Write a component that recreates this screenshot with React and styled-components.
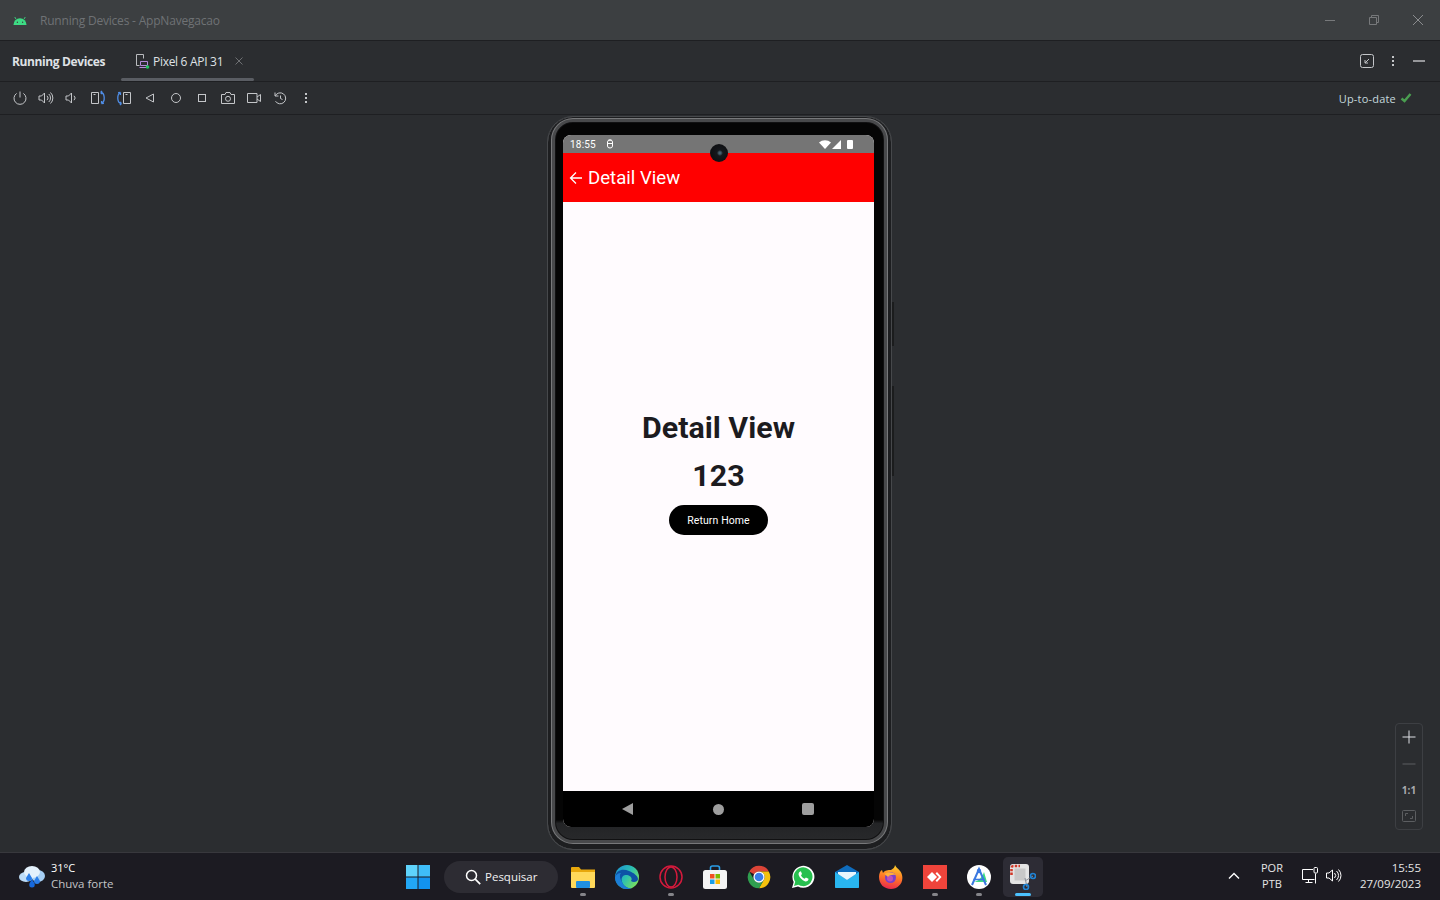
import styled, { createGlobalStyle } from "styled-components";

const GlobalStyle = createGlobalStyle`
  html, body, #root { margin: 0; padding: 0; height: 100%; }
  body { background: #2b2d30; overflow: hidden; font-family: "Open Sans", sans-serif; }
  * { box-sizing: border-box; }
`;

function App() {
  return (
    <Page>
      <GlobalStyle />
      <TitleBar>
        <Android width="14" height="9" viewBox="0 0 16 10">
          <path d="M0.5 10a7.5 7.500 0 0 1 15 0z" fill="#3ddc84" />
          <path d="M3.500 3.600 2 1M12.500 3.600 14 1" stroke="#3ddc84" strokeWidth="1" />
          <circle cx="5" cy="7" r=".8" fill="#3c3f41" />
          <circle cx="11" cy="7" r=".8" fill="#3c3f41" />
        </Android>
        <WindowTitle>Running Devices - AppNavegacao</WindowTitle>
        <WindowButtons>
          <Glyph width="12" height="12" viewBox="0 0 12 12" $color="#77797b">
            <path d="M1 6.500h10" />
          </Glyph>
          <Glyph width="12" height="12" viewBox="0 0 12 12" $color="#77797b">
            <path d="M1.500 3.500h7v7h-7zM3.500 3.500v-2h7v7h-2" />
          </Glyph>
          <Glyph width="12" height="12" viewBox="0 0 12 12" $color="#8a8c8e">
            <path d="M1 1l10 10M11 1 1 11" />
          </Glyph>
        </WindowButtons>
      </TitleBar>

      <TabBar>
        <PanelName>Running Devices</PanelName>
        <Tab>
          <Glyph width="16" height="16" viewBox="0 0 16 16" $color="#b9bbbe">
            <path d="M5.500 12.500h-3v-11h7v4" />
            <path d="M6.500 8.500h7v4h-7z" stroke="#b48ad8" />
            <path d="M5.500 14.500h9" stroke="#b48ad8" />
            <circle cx="13.500" cy="14" r="1.800" fill="#22c55e" stroke="none" />
          </Glyph>
          <TabLabel>Pixel 6 API 31</TabLabel>
          <Glyph width="10" height="10" viewBox="0 0 10 10" $color="#6e7073">
            <path d="M1.500 1.500l7 7M8.500 1.500l-7 7" />
          </Glyph>
        </Tab>
        <TabTools>
          <Glyph width="14" height="14" viewBox="0 0 14 14">
            <rect x=".5" y=".5" width="13" height="13" rx="2" />
            <path d="M9 5 5 9M5 6v3h3" />
          </Glyph>
          <Dots />
          <Glyph width="14" height="14" viewBox="0 0 14 14">
            <path d="M1 7h12" strokeWidth="1.400" />
          </Glyph>
        </TabTools>
      </TabBar>

      <Toolbar>
        <ToolButton><Glyph viewBox="0 0 16 16"><path d="M8 1.500v6M4.600 3.400a6 6 0 1 0 6.800 0" /></Glyph></ToolButton>
        <ToolButton><Glyph viewBox="0 0 16 16"><path d="M1 6h2.500l3-3v10l-3-3H1zM9 5.800a3 3 0 0 1 0 4.400M10.800 4a5.500 5.500 0 0 1 0 8M12.500 2.500a7.600 7.600 0 0 1 0 11" /></Glyph></ToolButton>
        <ToolButton><Glyph viewBox="0 0 16 16"><path d="M2 6h2.500l3-3v10l-3-3H2zM10 5.800a3 3 0 0 1 0 4.400" /></Glyph></ToolButton>
        <ToolButton>
          <Glyph viewBox="0 0 16 16">
            <path d="M1.500 2.500h7v11h-7zM3.500 4.500h2" />
            <BlueArc d="M10.500 2.500c4.500 0 5 9 1 11M11.500 13.500l2.400-.2M11.500 13.500l.1-2.600M10.500 2.500l1.600-1.500M10.500 2.500l1.600 1.500" />
          </Glyph>
        </ToolButton>
        <ToolButton>
          <Glyph viewBox="0 0 16 16">
            <path d="M7.500 2.500h7v11h-7zM9.500 4.500h2" />
            <BlueArc d="M5.500 13.500c-4.500 0-5-9-1-11M4.500 2.500l-2.400.2M4.500 2.500l-.1 2.600M5.500 13.500l-1.600 1.500M5.500 13.500l-1.600-1.500" />
          </Glyph>
        </ToolButton>
        <ToolButton><Glyph viewBox="0 0 16 16"><path d="M11.500 4v8L4 8z" /></Glyph></ToolButton>
        <ToolButton><Glyph viewBox="0 0 16 16"><circle cx="8" cy="8" r="4.500" /></Glyph></ToolButton>
        <ToolButton><Glyph viewBox="0 0 16 16"><rect x="4.500" y="4.500" width="7" height="7" /></Glyph></ToolButton>
        <ToolButton><Glyph viewBox="0 0 16 16"><path d="M1.500 4.500h3.500l1-2h4l1 2h3.500v9h-13z" /><circle cx="8" cy="8.800" r="2.500" /></Glyph></ToolButton>
        <ToolButton><Glyph viewBox="0 0 16 16"><path d="M1.500 3.500h9.500v9h-9.500zM11 7l3.500-2.500v7L11 9" /></Glyph></ToolButton>
        <ToolButton><Glyph viewBox="0 0 16 16"><path d="M3 2.500v3.500h3.500M3.200 6a5.500 5.500 0 1 1 .3 5.200M8.500 5.500v3l2 1" /></Glyph></ToolButton>
        <ToolButton><Dots /></ToolButton>
        <SyncStatus>
          Up-to-date
          <Glyph width="12" height="12" viewBox="0 0 12 12" $color="#4a9e50">
            <path d="M1.500 6.500 4.500 9l6-7" strokeWidth="2.400" />
          </Glyph>
        </SyncStatus>
      </Toolbar>

      <Stage>
        <Phone>
          <SideButton $top={185} $height={44} />
          <SideButton $top={269} $height={90} />
          <Camera />
          <Screen>
            <StatusBar>
              <StatusTime>18:55</StatusTime>
              <Glyph width="10" height="10" viewBox="0 0 10 10" $color="#fff">
                <path d="M2.500 3a2.500 2 0 0 1 5 0v4a2.500 2 0 0 1-5 0zM2.500 4.500h5M3.500 1l3 0" />
              </Glyph>
              <StatusIcons>
                <svg width="12" height="9" viewBox="0 0 12 9"><path d="M0 2.500a9 9 0 0 1 12 0L6 9z" fill="#fff" /></svg>
                <svg width="9" height="9" viewBox="0 0 9 9"><path d="M9 0v9H0z" fill="#fff" /></svg>
                <Battery />
              </StatusIcons>
            </StatusBar>
            <AppBar>
              <Glyph width="14" height="14" viewBox="0 0 14 14" $color="#fff">
                <path d="M13 7H1.500M7 1.500 1.500 7 7 12.500" strokeWidth="1.300" />
              </Glyph>
              <AppTitle>Detail View</AppTitle>
            </AppBar>
            <Body>
              <Heading>Detail View</Heading>
              <Heading>123</Heading>
              <ReturnButton>Return Home</ReturnButton>
            </Body>
            <NavBar>
              <svg width="11" height="12" viewBox="0 0 11 12"><path d="M0 6 11 0v12z" fill="#9e9e9e" /></svg>
              <NavHome />
              <NavRecent />
            </NavBar>
          </Screen>
        </Phone>

        <ZoomPanel>
          <Glyph width="14" height="14" viewBox="0 0 14 14" $color="#dfe1e5">
            <path d="M7 .5v13M.5 7h13" />
          </Glyph>
          <Glyph width="14" height="14" viewBox="0 0 14 14" $color="#5c5e61">
            <path d="M.5 7h13" />
          </Glyph>
          <ZoomLabel>1:1</ZoomLabel>
          <Glyph width="14" height="12" viewBox="0 0 14 12" $color="#5c5e61">
            <rect x=".5" y=".5" width="13" height="11" rx="1" />
            <path d="M3.500 6V3.500H6M10.500 6v2.500H8" />
          </Glyph>
        </ZoomPanel>
      </Stage>

      <Taskbar>
        <Weather>
          <svg width="28" height="24" viewBox="0 0 28 24">
            <ellipse cx="8" cy="12" rx="7" ry="5" fill="#bcdcf8" />
            <ellipse cx="20" cy="11" rx="7" ry="6" fill="#a6cff5" />
            <ellipse cx="14" cy="7" rx="8" ry="6" fill="#e4f1fc" />
            <path d="M11 8l3 5a3 3 0 1 1-6 0zM19 11l3 5a3 3 0 1 1-6 0z" fill="#2a7de8" />
            <path d="M14 14l2.500 4.500a2.800 2.800 0 1 1-5 0z" fill="#1668dc" />
          </svg>
          <WeatherText>
            <WeatherTemp>31°C</WeatherTemp>
            <WeatherDesc>Chuva forte</WeatherDesc>
          </WeatherText>
        </Weather>

        <TaskIcons>
          <TaskSlot>
            <svg width="24" height="24" viewBox="0 0 24 24">
              <rect width="11.500" height="11.500" fill="#5fd3fb" />
              <rect x="12.500" width="11.500" height="11.500" fill="#3fbdf8" />
              <rect y="12.500" width="11.500" height="11.500" fill="#22a7f5" />
              <rect x="12.500" y="12.500" width="11.500" height="11.500" fill="#1293f0" />
            </svg>
          </TaskSlot>
          <SearchBox>
            <Glyph width="16" height="16" viewBox="0 0 16 16" $color="#fff">
              <circle cx="6.500" cy="6.500" r="5" strokeWidth="1.500" />
              <path d="m10.200 10.200 5 5" strokeWidth="1.700" />
            </Glyph>
            Pesquisar
          </SearchBox>
          <TaskSlot $open>
            <svg width="24" height="22" viewBox="0 0 24 22">
              <path d="M0 2a1 1 0 0 1 1-1h7l2 2.500h14V20H0z" fill="#e8a80c" />
              <path d="M0 6h24v15a1 1 0 0 1-1 1H1a1 1 0 0 1-1-1z" fill="#ffd95a" />
              <rect x="5" y="15" width="14" height="7" rx="1" fill="#1f8fe0" />
            </svg>
          </TaskSlot>
          <TaskSlot>
            <svg width="24" height="24" viewBox="0 0 24 24">
              <defs>
                <linearGradient id="edgeTop" x1="0" y1="0" x2="1" y2=".7">
                  <stop offset="0" stopColor="#1b8ed8" />
                  <stop offset=".55" stopColor="#2cc0b0" />
                  <stop offset="1" stopColor="#7ae05c" />
                </linearGradient>
              </defs>
              <circle cx="12" cy="12" r="12" fill="url(#edgeTop)" />
              <path d="M0 12C1 5 8 3 14 6c5 2 9 5 9 8 0 3-5 4-7 2 2-3-1-6-5-6-4 0-5 4-4 7 1 3 4 6 9 6.700C7 25 0 19 0 12z" fill="#0d52a6" />
              <path d="M7 17c1 3 4 6 9 6.700C8 26 0 20 0 12c1-2 3-4 6-4-2 2-1 6 1 9z" fill="#1c7ed6" />
            </svg>
          </TaskSlot>
          <TaskSlot $open>
            <svg width="24" height="24" viewBox="0 0 24 24" fill="none" stroke="#d41a3c" strokeWidth="1.500">
              <circle cx="12" cy="12" r="11" />
              <ellipse cx="12" cy="12" rx="6" ry="10" />
            </svg>
          </TaskSlot>
          <TaskSlot>
            <svg width="24" height="24" viewBox="0 0 24 24">
              <path d="M7.500 6V3a2 2 0 0 1 2-2h5a2 2 0 0 1 2 2v3" fill="none" stroke="#2a9fe8" strokeWidth="1.600" />
              <rect y="5" width="24" height="19" rx="2.500" fill="#f4f4f4" />
              <rect x="7" y="9" width="4.500" height="4.500" fill="#f25022" />
              <rect x="12.500" y="9" width="4.500" height="4.500" fill="#7fba00" />
              <rect x="7" y="14.500" width="4.500" height="4.500" fill="#1a9ee8" />
              <rect x="12.500" y="14.500" width="4.500" height="4.500" fill="#ffb900" />
            </svg>
          </TaskSlot>
          <TaskSlot>
            <svg width="24" height="24" viewBox="0 0 32 32">
              <path d="M16 1A15 15 0 0 1 29 8.500H16A7.500 7.500 0 0 0 9.500 12.250L3 8.500A15 15 0 0 1 16 1Z" fill="#db4437" />
              <path d="M29 8.500A15 15 0 0 1 16 31L22.500 19.750A7.500 7.500 0 0 0 16 8.500Z" fill="#f4c20d" />
              <path d="M3 8.500 9.500 19.750A7.500 7.500 0 0 0 22.500 19.750L16 31A15 15 0 0 1 3 8.500Z" fill="#2f9e4f" />
              <circle cx="16" cy="16" r="7.500" fill="#fff" />
              <circle cx="16" cy="16" r="5.800" fill="#3a7de8" />
            </svg>
          </TaskSlot>
          <TaskSlot>
            <svg width="24" height="24" viewBox="0 0 24 24">
              <path d="M1 23l1.700-6A11 11 0 1 1 7 21.400z" fill="#fff" />
              <path d="M3 21l1.200-4.200A9.400 9.400 0 1 1 7.300 19.800z" fill="#27c04f" />
              <path d="M8.800 6.800c-1 .5-1.600 2-1 3.500 1 2.600 3.300 5 6 6 1.500.5 3 0 3.500-1.200l.2-1.400-2.600-1.300-1.200 1.400c-1.500-.6-3-2-3.700-3.600l1-1.200-1.100-2.700z" fill="#fff" />
            </svg>
          </TaskSlot>
          <TaskSlot>
            <svg width="24" height="24" viewBox="0 0 24 24">
              <path d="M0 7 12 0l12 7v15a1 1 0 0 1-1 1H1a1 1 0 0 1-1-1z" fill="#0f6cbd" />
              <path d="M0 7l12 8 12-8v15a1 1 0 0 1-1 1H1a1 1 0 0 1-1-1z" fill="#29b6f0" />
              <path d="M3 7h18v2l-9 6-9-6z" fill="#e8f6fd" />
            </svg>
          </TaskSlot>
          <TaskSlot>
            <svg width="24" height="24" viewBox="0 0 24 24">
              <defs>
                <linearGradient id="foxFur" x1=".6" y1="0" x2=".4" y2="1">
                  <stop offset="0" stopColor="#ffd02a" />
                  <stop offset=".5" stopColor="#ff7a26" />
                  <stop offset="1" stopColor="#e8274e" />
                </linearGradient>
              </defs>
              <path d="M16 0c1 3 6 5 7 10 2 8-4 14-11 14C5 24 0 19 0 12c0-3 1-6 3-7l1 3c2-3 5-3 8-3 2-1 4-3 4-5z" fill="url(#foxFur)" />
              <circle cx="11.500" cy="12.500" r="5.500" fill="#7b3fc8" />
              <circle cx="11" cy="13.500" r="3" fill="#c04fb8" />
              <path d="M5.500 9c4-3 9-2 11.500 1-3-.5-7 0-8 2z" fill="#ffb03a" />
            </svg>
          </TaskSlot>
          <TaskSlot $open>
            <AnyDeskTile>
              <svg width="16" height="10" viewBox="0 0 16 10">
                <path d="M5 0l5 5-5 5-5-5z" fill="#fff" />
                <path d="M10 0l4.500 5L10 10l-1.500-1.500L12 5 8.500 1.500z" fill="#fff" />
              </svg>
            </AnyDeskTile>
          </TaskSlot>
          <TaskSlot $open>
            <svg width="24" height="24" viewBox="0 0 24 24">
              <circle cx="12" cy="12" r="12" fill="#fff" />
              <path d="M6 17c3 0 9-3 11-10l3 10z" fill="#3ddc84" />
              <path d="M5 20 12 4l7 16" fill="none" stroke="#3a78e0" strokeWidth="2" />
              <path d="M6.500 14.500h11" stroke="#3a78e0" strokeWidth="1.600" />
              <circle cx="12" cy="6" r="2.200" fill="#3a78e0" />
            </svg>
          </TaskSlot>
          <TaskSlot $active>
            <svg width="26" height="26" viewBox="0 0 26 26">
              <rect x="0" y="0" width="19" height="20" rx="3" fill="#e4e4e4" />
              <path d="M1.500 11V4a2 2 0 0 1 2-2H10" fill="none" stroke="#d13a2a" strokeWidth="2.600" strokeDasharray="2.400 1.300" />
              <rect x="4.500" y="4.500" width="11" height="12" fill="#c8c8c8" />
              <path d="M15 17 23 12M15 14l2 9" stroke="#8a8f98" strokeWidth="1" />
              <circle cx="23" cy="12" r="2.500" fill="none" stroke="#1f84d6" strokeWidth="1.600" />
              <circle cx="16" cy="23" r="2.500" fill="none" stroke="#1f84d6" strokeWidth="1.600" />
            </svg>
          </TaskSlot>
        </TaskIcons>

        <Tray>
          <Glyph width="12" height="12" viewBox="0 0 12 12" $color="#fff">
            <path d="m1 8.500 5-5 5 5" strokeWidth="1.400" />
          </Glyph>
          <TrayLang>
            <span>POR</span>
            <span>PTB</span>
          </TrayLang>
          <TrayIcons>
            <Glyph width="17" height="17" viewBox="0 0 17 17" $color="#fff">
              <path d="M11 2.500H.5v10h12M3.500 15.500h7M6.500 12.500v3M13.500 6.500v10" />
              <rect x="12" y=".5" width="3.500" height="5.500" rx="1" />
            </Glyph>
            <Glyph width="17" height="17" viewBox="0 0 17 17" $color="#fff">
              <path d="M.5 6h2.500l3.500-3v11L3 11H.5zM8.500 6a3.500 3.500 0 0 1 0 5M10.500 4a6 6 0 0 1 0 9M12.500 2.500a8.500 8.500 0 0 1 0 12" />
            </Glyph>
          </TrayIcons>
          <Clock>
            <span>15:55</span>
            <span>27/09/2023</span>
          </Clock>
        </Tray>
      </Taskbar>
    </Page>
  );
}

export default App;

/****************** styled component ***************/

const Page = styled.div`
  width: 1440px;
  height: 900px;
  display: flex;
  flex-direction: column;
  background: #2b2d30;
`;

const Glyph = styled.svg.attrs((p) => ({
  width: p.width || 16,
  height: p.height || 16,
}))`
  display: block;
  flex: none;
  fill: none;
  stroke: ${(p) => p.$color || "#c4c6c9"};
  stroke-width: 1;
`;

const BlueArc = styled.path`
  stroke: #4f8ee8;
  stroke-width: 1.3;
`;

const TitleBar = styled.div`
  height: 41px;
  flex: none;
  display: flex;
  align-items: center;
  padding: 0 16px 0 13px;
  background: #3c3f41;
  border-bottom: 1px solid #1e1f22;
`;

const Android = styled.svg`
  display: block;
  margin-right: 13px;
`;

const WindowTitle = styled.span`
  font-size: 12px;
  letter-spacing: -0.2px;
  color: #6f7275;
`;

const WindowButtons = styled.div`
  margin-left: auto;
  display: flex;
  gap: 32px;
`;

const TabBar = styled.div`
  height: 41px;
  flex: none;
  display: flex;
  align-items: center;
  padding: 0 14px 0 12px;
  border-bottom: 1px solid #1e1f22;
`;

const PanelName = styled.span`
  font-size: 12px;
  font-weight: 700;
  letter-spacing: -0.38px;
  color: #dfe1e5;
  width: 109px;
`;

const Tab = styled.div`
  position: relative;
  align-self: stretch;
  width: 133px;
  display: flex;
  align-items: center;
  padding-left: 13px;

  &::after {
    content: "";
    position: absolute;
    left: 0;
    right: 0;
    bottom: 0;
    height: 3px;
    border-radius: 2px;
    background: #5a5d63;
  }
`;

const TabLabel = styled.span`
  font-size: 12px;
  letter-spacing: -0.3px;
  color: #dfe1e5;
  width: 84px;
  padding-left: 3px;
`;

const TabTools = styled.div`
  margin-left: auto;
  display: flex;
  align-items: center;
  gap: 18px;
`;

const Dots = styled.span`
  display: block;
  width: 2px;
  height: 2px;
  margin: 4px 0;
  background: #c4c6c9;
  box-shadow: 0 -4px 0 #c4c6c9, 0 4px 0 #c4c6c9;
`;

const Toolbar = styled.div`
  height: 33px;
  flex: none;
  display: flex;
  align-items: center;
  padding: 0 28px 0 7px;
  border-bottom: 1px solid #1e1f22;
`;

const ToolButton = styled.div`
  width: 26px;
  display: flex;
  justify-content: center;
`;

const SyncStatus = styled.div`
  margin-left: auto;
  display: flex;
  align-items: center;
  gap: 4px;
  font-size: 11px;
  letter-spacing: 0.2px;
  color: #c4d8dd;
`;

const Stage = styled.div`
  position: relative;
  flex: 1;
  min-height: 0;
  display: flex;
  justify-content: center;
  padding: 1px 1px 0 0;
`;

const Phone = styled.div`
  position: relative;
  width: 345px;
  height: 734px;
  padding: 18px 17px 22px 15px;
  border: 1px solid #46484b;
  border-radius: 26px;
  background: linear-gradient(#050505 0 96%, #232426 96.500%, #2a2b2d 100%);
  box-shadow:
    inset 0 -2px 0 3px #1d1e20,
    inset 0 -2px 0 4px #77787a,
    inset 0 -2px 0 7px #48494b,
    inset 0 -2px 0 8px #111112;
`;

const SideButton = styled.span`
  position: absolute;
  right: -3px;
  top: ${(p) => p.$top}px;
  width: 2px;
  height: ${(p) => p.$height}px;
  background: #1b1c1d;
`;

const Camera = styled.span`
  position: absolute;
  z-index: 1;
  left: 162px;
  top: 27px;
  width: 18px;
  height: 18px;
  border-radius: 50%;
  background: radial-gradient(circle at 55% 50%, #44606e 0 1px, #15181c 3px, #101114 8px);
`;

const Screen = styled.div`
  height: 100%;
  display: flex;
  flex-direction: column;
  border-radius: 8px;
  overflow: hidden;
  background: #fffbfe;
`;

const StatusBar = styled.div`
  height: 18px;
  flex: none;
  display: flex;
  align-items: center;
  gap: 9px;
  padding: 0 21px 0 7px;
  background: #757575;
`;

const StatusTime = styled.span`
  font-family: Roboto, sans-serif;
  font-size: 10px;
  letter-spacing: 0.2px;
  color: #fff;
`;

const StatusIcons = styled.div`
  margin-left: auto;
  display: flex;
  align-items: center;
  gap: 1px;
`;

const Battery = styled.span`
  width: 6px;
  height: 9px;
  margin-left: 5px;
  border-radius: 1px;
  background: #fff;
`;

const AppBar = styled.div`
  height: 49px;
  flex: none;
  display: flex;
  align-items: center;
  gap: 5px;
  padding: 0 0 0 6px;
  background: #ff0000;
`;

const AppTitle = styled.span`
  font-family: Roboto, sans-serif;
  font-size: 18.6px;
  color: #fff;
`;

const Body = styled.div`
  flex: 1;
  display: flex;
  flex-direction: column;
  align-items: center;
  justify-content: center;
  padding-bottom: 54px;
`;

const Heading = styled.h1`
  margin: 0;
  height: 48px;
  line-height: 48px;
  font-family: Roboto, sans-serif;
  font-size: 30.4px;
  font-weight: 700;
  color: #1c1b1f;
`;

const ReturnButton = styled.button`
  width: 99px;
  height: 30px;
  margin-top: 5px;
  border: 0;
  border-radius: 15px;
  background: #000;
  color: #fff;
  font-family: Roboto, sans-serif;
  font-size: 10.5px;
  font-weight: 400;
  letter-spacing: 0.1px;
`;

const NavBar = styled.div`
  height: 36px;
  flex: none;
  display: flex;
  align-items: center;
  justify-content: space-between;
  padding: 0 60px 0 59px;
  background: #000;
`;

const NavHome = styled.span`
  width: 11px;
  height: 11px;
  margin-left: 2px;
  border-radius: 50%;
  background: #9e9e9e;
`;

const NavRecent = styled.span`
  width: 12px;
  height: 12px;
  border-radius: 2px;
  background: #9e9e9e;
`;

const ZoomPanel = styled.div`
  position: absolute;
  left: 1395px;
  top: 608px;
  width: 28px;
  height: 107px;
  display: flex;
  flex-direction: column;
  align-items: center;
  justify-content: space-between;
  padding: 6px 0 7px;
  border: 1px solid #3d3f43;
  border-radius: 4px;
`;

const ZoomLabel = styled.span`
  font-size: 10px;
  font-weight: 700;
  line-height: 14px;
  color: #a9abae;
`;

const Taskbar = styled.div`
  height: 48px;
  flex: none;
  display: flex;
  align-items: center;
  background: #1c1b22;
  border-top: 1px solid #38383d;
`;

const Weather = styled.div`
  width: 396px;
  display: flex;
  align-items: center;
  gap: 5px;
  padding-left: 18px;
`;

const WeatherText = styled.div`
  display: flex;
  flex-direction: column;
  margin-bottom: 2px;
  font-size: 11px;
  line-height: 16px;
`;

const WeatherTemp = styled.span`
  color: #fff;
`;

const WeatherDesc = styled.span`
  font-size: 11.5px;
  color: #c5c5c8;
`;

const TaskIcons = styled.div`
  display: flex;
  align-items: center;
`;

const TaskSlot = styled.div`
  position: relative;
  width: 40px;
  height: 40px;
  margin: 0 2px;
  display: flex;
  align-items: center;
  justify-content: center;
  border-radius: 5px;
  background: ${(p) => (p.$active ? "#2d2c35" : "transparent")};

  &::after {
    content: "";
    display: ${(p) => (p.$open || p.$active ? "block" : "none")};
    position: absolute;
    bottom: 1px;
    left: 50%;
    transform: translateX(-50%);
    width: ${(p) => (p.$active ? "16px" : "6px")};
    height: 3px;
    border-radius: 2px;
    background: ${(p) => (p.$active ? "#4cc2ff" : "#85858a")};
  }
`;

const SearchBox = styled.div`
  width: 114px;
  height: 32px;
  margin: 0 3px 0 4px;
  display: flex;
  align-items: center;
  gap: 4px;
  padding-left: 21px;
  border-radius: 16px;
  background: #2d2c33;
  font-size: 11.5px;
  color: #f2f2f2;
`;

const AnyDeskTile = styled.div`
  width: 24px;
  height: 24px;
  display: flex;
  align-items: center;
  justify-content: center;
  background: #ef443b;
`;

const Tray = styled.div`
  margin-left: auto;
  display: flex;
  align-items: center;
  padding: 0 19px 2px 0;
  color: #e6e6e6;
  font-size: 11.5px;
`;

const TrayLang = styled.div`
  display: flex;
  flex-direction: column;
  align-items: center;
  font-size: 11px;
  line-height: 16px;
  margin: 0 19px 0 21px;
`;

const TrayIcons = styled.div`
  display: flex;
  gap: 7px;
  margin-right: 17px;
`;

const Clock = styled.div`
  display: flex;
  flex-direction: column;
  align-items: flex-end;
  line-height: 16px;
`;
